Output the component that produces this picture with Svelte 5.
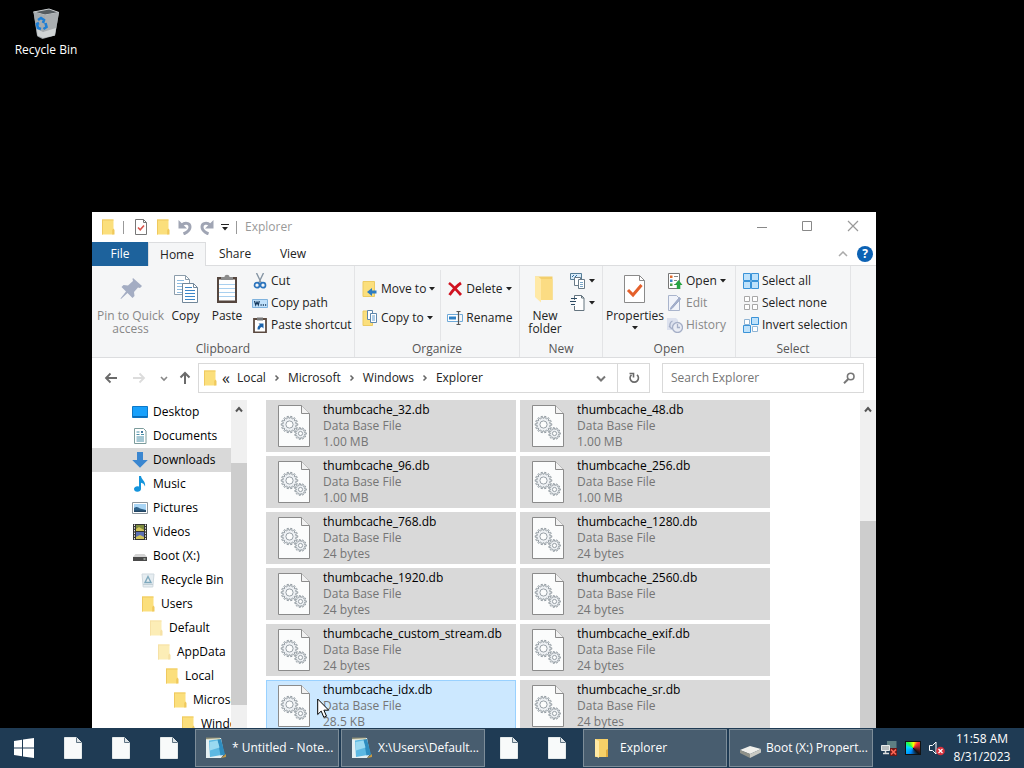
<script lang="ts">
  type TreeItem = { label: string; icon: string; level: number; current?: boolean };
  type FileItem = { name: string; size: string; active?: boolean };

  const tree: TreeItem[] = [
    { label: 'Desktop', icon: 'desktop', level: 0 },
    { label: 'Documents', icon: 'documents', level: 0 },
    { label: 'Downloads', icon: 'downloads', level: 0, current: true },
    { label: 'Music', icon: 'music', level: 0 },
    { label: 'Pictures', icon: 'pictures', level: 0 },
    { label: 'Videos', icon: 'videos', level: 0 },
    { label: 'Boot (X:)', icon: 'drive', level: 0 },
    { label: 'Recycle Bin', icon: 'bin', level: 1 },
    { label: 'Users', icon: 'folder', level: 1 },
    { label: 'Default', icon: 'folder-hidden', level: 2 },
    { label: 'AppData', icon: 'folder-hidden', level: 3 },
    { label: 'Local', icon: 'folder', level: 4 },
    { label: 'Microsoft', icon: 'folder', level: 5 },
    { label: 'Windows', icon: 'folder', level: 6 },
  ];

  const files: FileItem[] = [
    { name: 'thumbcache_32.db', size: '1.00 MB' },
    { name: 'thumbcache_48.db', size: '1.00 MB' },
    { name: 'thumbcache_96.db', size: '1.00 MB' },
    { name: 'thumbcache_256.db', size: '1.00 MB' },
    { name: 'thumbcache_768.db', size: '24 bytes' },
    { name: 'thumbcache_1280.db', size: '24 bytes' },
    { name: 'thumbcache_1920.db', size: '24 bytes' },
    { name: 'thumbcache_2560.db', size: '24 bytes' },
    { name: 'thumbcache_custom_stream.db', size: '24 bytes' },
    { name: 'thumbcache_exif.db', size: '24 bytes' },
    { name: 'thumbcache_idx.db', size: '28.5 KB', active: true },
    { name: 'thumbcache_sr.db', size: '24 bytes' },
  ];

  const crumbs = ['Local', 'Microsoft', 'Windows', 'Explorer'];
  const tabs = ['Home', 'Share', 'View'];

  let tab = $state('Home');
  let query = $state('');

  // outline of a gear centred on cx, cy
  function gear(cx: number, cy: number, outer: number, inner: number, teeth: number) {
    const points: string[] = [];
    const step = (Math.PI * 2) / teeth;
    for (let i = 0; i < teeth; i++) {
      const a = i * step;
      for (const [offset, r] of [[-0.28, inner], [-0.2, outer], [0.2, outer], [0.28, inner]]) {
        const angle = a + offset * step;
        points.push(`${(cx + Math.cos(angle) * r).toFixed(2)} ${(cy + Math.sin(angle) * r).toFixed(2)}`);
      }
    }
    return `M${points.join('L')}Z`;
  }

  const bigGear = gear(11.5, 19.5, 8.3, 6.4, 14);
  const smallGear = gear(22.5, 28.5, 5.9, 4.3, 11);
</script>

{#snippet icon(name: string, size = 16)}
  <svg class="icon" width={size} height={size} viewBox="0 0 16 16" aria-hidden="true">
    {#if name === 'folder' || name === 'folder-hidden'}
      <g opacity={name === 'folder' ? 1 : 0.55}>
        <path d="M2 .5h11.5v15H2z" fill="#fbdf7c" />
        <path d="M2 .5h11.5v1H3v14H2z" fill="#efc95f" />
        <path d="M12.2 15.5V11l1.3-1.5 1 1.5v4.5z" fill="#f0c95c" />
      </g>
    {:else if name === 'doc-check'}
      <path d="M2.5.5h8l3 3v12h-11z" fill="#fff" stroke="#777" />
      <path d="M10.5.5v3h3" fill="none" stroke="#777" />
      <path d="M5 8.500l2.200 2.300L11 6.500" fill="none" stroke="#d9534a" stroke-width="1.600" />
    {:else if name === 'undo' || name === 'redo'}
      <g transform={name === 'redo' ? 'matrix(-1 0 0 1 16 0)' : undefined}>
        <path d="M5 6C7.500 3.500 13 3.500 13 8c0 3.500-3 5.500-6.500 7" fill="none" stroke="#a0a5b4" stroke-width="3" />
        <path d="M1.500 1v8.500h8.500z" fill="#a0a5b4" />
      </g>
    {:else if name === 'desktop'}
      <path d="M.5 2.500h15v11H.5z" fill="#18a0fb" stroke="#0d78c8" />
      <path d="M1 12h14v1.500H1z" fill="#0a6cba" />
    {:else if name === 'documents'}
      <path d="M2.500.5h9l2.500 2.500v12.500H2.500z" fill="#fff" stroke="#7c9c9c" />
      <path d="M4.500 4h3M4.500 6.500h3M4.500 9h7.500M4.500 11h7.500M4.500 13h7.500M9 6.500h3" stroke="#4b90a8" />
      <path d="M9 3h2v2H9z" fill="#44789e" />
    {:else if name === 'downloads'}
      <path d="M5 0h6v8h4.800L8 15.800.2 8H5z" fill="#3a86d0" />
    {:else if name === 'music'}
      <path d="M7 0h2c.5 4 5 5 4 10.500-.8-2.500-2-3.300-4-3.700v6A3.500 2.800 0 1 1 7 10.500z" fill="#1494dc" />
    {:else if name === 'pictures'}
      <path d="M.5 2.500h15v11H.5z" fill="#fff" stroke="#8d969d" />
      <path d="M2 4h12v8H2z" fill="#a9d5f5" />
      <path d="M2 8c3-2 4-1 6 .5l6 1.500v2H2z" fill="#2f6188" />
      <path d="M2 10.500h12V12H2z" fill="#234562" />
    {:else if name === 'videos'}
      <path d="M1 0h14v16H1z" fill="#333" />
      <path d="M4 1h8v6H4z" fill="#7c8a3e" />
      <path d="M4 8h8v7H4z" fill="#5c70b4" />
      <path d="M4 5l3-2 5 3v1H4zM4 13l4-2 4 2v2H4z" fill="#d2c55a" />
      <path d="M2.500.5v15M13.500.5v15" stroke="#eee" stroke-dasharray="1.500 1.200" />
    {:else if name === 'drive'}
      <path d="M3.500 6h9L15 9H1z" fill="#d4d4d4" />
      <path d="M1 9h14v4H1z" fill="#4a4a4a" />
      <path d="M11.500 10.500h2v1h-2z" fill="#dde8dd" />
    {:else if name === 'bin'}
      <path d="M2 2h12l-1.200 13H3.200z" fill="#e6edf1" stroke="#cfd9df" />
      <path d="M8 4.500L5 10.500h6z" fill="none" stroke="#7fa9bd" stroke-width="1.400" />
      <path d="M3 12.500h10" stroke="#c4d0d6" />
    {:else if name === 'cut'}
      <path d="M4.500 0l4.800 10M11.500 0L6.700 10" stroke="#8695a4" stroke-width="1.400" />
      <circle cx="5" cy="12.200" r="2.500" fill="none" stroke="#2b74bd" stroke-width="1.700" />
      <circle cx="11" cy="12.200" r="2.500" fill="none" stroke="#2b74bd" stroke-width="1.700" />
    {:else if name === 'copy-path'}
      <path d="M.5 4.500h15v8H.5z" fill="#bfe0fa" stroke="#7fb2dd" />
      <path d="M2.500 6l1.200 4L5 7l1.300 3 1-4" fill="none" stroke="#173a5e" stroke-width="1.200" />
      <path d="M8.500 10h1.200M10.800 10H12M13 10h1.200" stroke="#173a5e" stroke-width="1.400" />
    {:else if name === 'paste-shortcut'}
      <path d="M2 2h12v13.500H2z" fill="#fff" stroke="#5b4a40" stroke-width="1.800" />
      <path d="M5 .5h6v3H5z" fill="#777" />
      <path d="M5.500 12.500c0-3 1-4 2.500-4.500L6.500 6.500h5v5L10 10c-1.500.3-2 1-2.300 2.500z" fill="#1b63ab" />
    {:else if name === 'move-to'}
      <path d="M1 .5h11.500v15H1z" fill="#fbdf7c" stroke="#eccb63" />
      <path d="M14.500 9.500H10V7l-5 4 5 4v-2.500h4.500z" fill="#2d7cc2" />
    {:else if name === 'copy-to'}
      <path d="M1 1h9.500v14.500H1z" fill="#fbdf7c" stroke="#eccb63" />
      <path d="M5.500.5h5v9h-5z" fill="#fff" stroke="#5e86ac" />
      <path d="M8.500 3.500h6v9h-6z" fill="#fff" stroke="#5e86ac" />
      <path d="M10 6h3M10 8h3M10 10h3" stroke="#5e9bd0" />
    {:else if name === 'delete'}
      <path d="M2 2C6 5 10 9.500 14 14M14 2C9.500 5 6 9 2.500 14" fill="none" stroke="#d01220" stroke-width="2.800" />
    {:else if name === 'rename'}
      <path d="M11 4.500H.5v7H11" fill="#fff" stroke="#6ea9d8" />
      <path d="M2 6.500h7v3H2z" fill="#2f80c5" />
      <path d="M12.500 4.500h3v7h-3" fill="none" stroke="#6ea9d8" />
      <path d="M9.500 1.500h4M11.500 1.500v13M9.500 14.500h4" stroke="#555" stroke-width="1.200" />
    {:else if name === 'new-item'}
      <path d="M.5.5h11v6H.5z" fill="#d9ecfa" stroke="#557c96" />
      <path d="M2 4l2-2M5 4l2-2" stroke="#2d6ca0" />
      <path d="M4.500 4.500h6v8h-6z" fill="#fff" stroke="#6a7b88" />
      <path d="M8.500 6.500h6v9h-6z" fill="#fff" stroke="#6a7b88" />
      <path d="M10 9.500h3M10 11.500h3M10 13.500h3" stroke="#7aa7c8" />
    {:else if name === 'easy-access'}
      <path d="M4.500 5V.5h7L14 3v12.500H4.500V11" fill="#fff" stroke="#64747f" />
      <path d="M11.500.5V3H14" fill="none" stroke="#64747f" />
      <path d="M1 3.500h6M0 6.500h6M1 9.500h4" stroke="#2c4a62" stroke-width="1.200" />
    {:else if name === 'open'}
      <path d="M1.500.5h11v15h-11z" fill="#fff" stroke="#777" />
      <path d="M3 2.500h2.500V5H3z" fill="#e06a2e" /><path d="M3 6.500h2.500V9H3z" fill="#3d85c6" />
      <path d="M3 10.500h2.500V13H3z" fill="#4fa34d" />
      <path d="M7 3.500h4M7 7.500h3M7 11.500h2" stroke="#888" />
      <path d="M9.800 16v-4H7.500L11.500 7l4 5h-2.200v4z" fill="#27a343" />
    {:else if name === 'edit'}
      <path d="M1.500.5h8l3 3v12h-11z" fill="#f0f3fa" stroke="#a9b4cc" />
      <path d="M13.500 4L5 13.500l-1.500.8.5-1.800L12.500 2.500z" fill="#a6b2cf" stroke="#98a5c4" />
    {:else if name === 'history'}
      <path d="M0 1h9l2 2v10H0z" fill="#dce1ee" />
      <circle cx="10.500" cy="10.500" r="5" fill="#e9ecf4" stroke="#a5afc7" stroke-width="1.300" />
      <path d="M10.500 7v3.500H13M2 9l3 3M5.500 4C3 5 2.500 7 3 10" fill="none" stroke="#a5afc7" stroke-width="1.300" />
    {:else if name === 'select-all'}
      <path d="M.5.5h7v7h-7zM8.500.5h7v7h-7zM.5 8.500h7v7h-7zM8.500 8.500h7v7h-7z" fill="#bfe2fb" stroke="#3a93d8" />
    {:else if name === 'select-none'}
      <path d="M1.500 1.500h5v5h-5zM9.500 1.500h5v5h-5zM1.500 9.500h5v5h-5zM9.500 9.500h5v5h-5z" fill="#fff" stroke="#a8a8a8" />
    {:else if name === 'invert'}
      <path d="M8.500.5h7v7h-7zM.5 8.500h7v7h-7z" fill="#bfe2fb" stroke="#3a93d8" />
      <path d="M1.500 2.500h5v5h-5zM9.500 9.500h5v5h-5z" fill="#fff" stroke="#8fb4d4" />
    {:else if name === 'back' || name === 'forward'}
      <path
        transform={name === 'forward' ? 'matrix(-1 0 0 1 16 0)' : undefined}
        d="M14 8H3M7.500 3.500L3 8l4.500 4.500"
        fill="none"
        stroke={name === 'back' ? '#6a6a6a' : '#dcdcdc'}
        stroke-width="1.800"
      />
    {:else if name === 'up'}
      <path d="M8 14V3M3.500 7.500L8 3l4.500 4.500" fill="none" stroke="#6a6a6a" stroke-width="2" />
    {:else if name === 'chevron-down'}
      <path d="M4 6.500l4 4 4-4" fill="none" stroke="#777" stroke-width="2" />
    {:else if name === 'chevron-up'}
      <path d="M5 9.500L8 6l3 3.500" fill="none" stroke="#555" stroke-width="2" />
    {:else if name === 'chevron-right'}
      <path d="M6.500 5.500L9 8l-2.500 2.500" fill="none" stroke="#666" stroke-width="1.500" />
    {:else if name === 'refresh'}
      <path d="M11 4.800A4.200 4.200 0 1 1 5.500 4.800" fill="none" stroke="#6a6a6a" stroke-width="1.600" />
      <path d="M3.500 3.500h4V7.500" fill="none" stroke="#6a6a6a" stroke-width="1.600" />
    {:else if name === 'search'}
      <circle cx="9.700" cy="6.500" r="3.300" fill="none" stroke="#777" stroke-width="1.600" />
      <path d="M7.300 9L3 13.200" stroke="#777" stroke-width="2" />
    {:else if name === 'minimize'}
      <path d="M4 8.500h10" stroke="#888" />
    {:else if name === 'maximize'}
      <path d="M3.500 2.500h9v9h-9z" fill="none" stroke="#888" />
    {:else if name === 'close'}
      <path d="M3 2l10 10M13 2L3 12" stroke="#999" stroke-width="1.200" />
    {/if}
  </svg>
{/snippet}

{#snippet caret()}
  <svg class="caret" width="6" height="4" viewBox="0 0 6 4" aria-hidden="true"><path d="M0 0h6L3 3.500z" fill="#222" /></svg>
{/snippet}

{#snippet command(name: string, label: string, menu = false, disabled = false)}
  <button class="command" {disabled}>
    {@render icon(name)}
    <span>{label}</span>
    {#if menu}{@render caret()}{/if}
  </button>
{/snippet}

{#snippet notepad()}
  <svg class="icon" width="22" height="24" viewBox="0 0 22 24" aria-hidden="true">
    <path d="M1 3l15-1 3 16-3 4H1z" fill="#e4eff2" />
    <path d="M4 4.500l11-1.500 4.500 15.500L5 21z" fill="#5cb8e2" />
    <path d="M12.500 3.500l3.500-.5 4 15.500-4.500 1z" fill="#2e8dc0" />
    <path d="M4.500 6l8-1.500 2 7-9.500 3z" fill="#9ad9f1" />
    <path d="M1.500 2.500h14" stroke="#c9b878" stroke-width="2" stroke-dasharray="1 1" />
    <path d="M16 22l5-4v3z" fill="#c99c43" />
  </svg>
{/snippet}

{#snippet blankFile()}
  <svg class="icon" width="18" height="22" viewBox="0 0 18 22" aria-hidden="true">
    <path d="M.5.5h12l5 5v16H.5z" fill="#f8fafa" stroke="#e4e9ea" />
    <path d="M12.500.5v5h5" fill="#dde3e6" stroke="#5f7382" />
  </svg>
{/snippet}

<div class="screen">
  <main class="desktop">
    <button class="shortcut">
      <svg width="32" height="32" viewBox="0 0 32 32" aria-hidden="true">
        <path d="M3.500 4L19 1l10 3.500-4 23-12.500 3.500-5-2.500z" fill="#9da2a5" />
        <path d="M3.500 4L19 1l10 3.500L15 7z" fill="#555c60" stroke="#c6cacc" />
        <path d="M3.500 4L15 7l-2 23-6-2.500z" fill="#a4abaf" />
        <path d="M15 7l14-2.500-4 23L13 30z" fill="#a9aeb1" />
        <path d="M7 21l6 3 13-4-1.500 7.500L13 30l-5.500-2.500z" fill="#e3e5e5" opacity="0.7" />
        <path d="M8 12l3-2 3 2-1 3M15.500 15l1 4-3 2M11 21l-3-1-1-4 2-1" fill="none" stroke="#1d7fd6" stroke-width="2.600" />
      </svg>
      <span>Recycle Bin</span>
    </button>

    <section class="window" aria-label="Explorer">
      <header class="titlebar">
        <div class="quick">
          {@render icon('folder')}
          <i class="bar first"></i>
          <button aria-label="Properties">{@render icon('doc-check')}</button>
          <button aria-label="New folder">{@render icon('folder')}</button>
          <button aria-label="Undo">{@render icon('undo')}</button>
          <button aria-label="Redo">{@render icon('redo')}</button>
          <button class="customize" aria-label="Customize toolbar">
            <svg class="icon" width="8" height="8" viewBox="0 0 8 8"><path d="M0 1.500h8" stroke="#222" /><path d="M1 4h6L4 7.500z" fill="#222" /></svg>
          </button>
          <i class="bar"></i>
        </div>
        <span class="title">Explorer</span>
        <div class="controls">
          <button aria-label="Minimize">{@render icon('minimize')}</button>
          <button aria-label="Maximize">{@render icon('maximize')}</button>
          <button aria-label="Close">{@render icon('close')}</button>
        </div>
      </header>

      <nav class="tabs" aria-label="Ribbon">
        <button class="file-tab">File</button>
        {#each tabs as name (name)}
          <button class="tab" class:selected={tab === name} onclick={() => (tab = name)}>{name}</button>
        {/each}
        <button class="collapse" aria-label="Collapse ribbon">
          <svg class="icon" width="10" height="6" viewBox="0 0 10 6"><path d="M1 5l4-4 4 4" fill="none" stroke="#aaa" stroke-width="1.500" /></svg>
        </button>
        <button class="help" aria-label="Help">?</button>
      </nav>

      <div class="ribbon">
        <div class="group clipboard">
          <div class="tools">
            <button class="big pin" disabled>
              <svg class="icon" width="32" height="32" viewBox="0 0 32 32" aria-hidden="true">
                <path d="M17 6l9 8-2 2-2-.5-4 4.500.5 4-2 2-5-5L5 27l-.5-.5L10 19.500l-4.500-4.500 2-2 4.500.5 5-4.500-.5-2z" fill="#a4adc3" transform="translate(1 -1)" />
              </svg>
              <span>Pin to Quick access</span>
            </button>
            <button class="big copy">
              <svg class="icon" width="32" height="32" viewBox="0 0 32 32" aria-hidden="true">
                <path d="M4.500 2.500h11l4 4v15h-15z" fill="#fff" stroke="#8c9dab" />
                <path d="M15.500 2.500v4h4" fill="none" stroke="#8c9dab" />
                <path d="M7 7.500h7M7 10.500h10M7 13.500h10M7 16.500h10M7 19.500h10" stroke="#8dbbe0" />
                <path d="M12.500 10.500h11l4 4v15h-15z" fill="#fff" stroke="#71879a" />
                <path d="M23.500 10.500v4h4" fill="none" stroke="#71879a" />
                <path d="M15 14.500h7M15 17.500h10M15 20.500h10M15 23.500h10M15 26.500h10" stroke="#3b86c8" />
              </svg>
              <span>Copy</span>
            </button>
            <button class="big paste">
              <svg class="icon" width="32" height="32" viewBox="0 0 32 32" aria-hidden="true">
                <path d="M6 4h20v26H6z" fill="#55463f" />
                <path d="M8 6.500h16v21H8z" fill="#fff" />
                <path d="M8 11.500h16M8 15.500h16M8 19.500h16M8 23.500h16" stroke="#a9d0ef" />
                <path d="M10 7V4h3.500c0-3 5-3 5 0H22v3z" fill="#8b8b8b" />
              </svg>
              <span>Paste</span>
            </button>
            <div class="stack">
              {@render command('cut', 'Cut')}
              {@render command('copy-path', 'Copy path')}
              {@render command('paste-shortcut', 'Paste shortcut')}
            </div>
          </div>
          <div class="caption">Clipboard</div>
        </div>

        <div class="group organize">
          <div class="tools">
            <div class="stack roomy">
              {@render command('move-to', 'Move to', true)}
              {@render command('copy-to', 'Copy to', true)}
            </div>
            <div class="stack roomy divided">
              {@render command('delete', 'Delete', true)}
              {@render command('rename', 'Rename')}
            </div>
          </div>
          <div class="caption">Organize</div>
        </div>

        <div class="group new">
          <div class="tools">
            <button class="big">
              <svg class="icon" width="32" height="32" viewBox="0 0 32 32" aria-hidden="true">
                <path d="M6 3.500h17.500V27L12 25.500 6 23z" fill="#f3cf6d" />
                <path d="M6 3.500h3l3 2.500v23.500L6 24z" fill="#ffe9a6" />
                <path d="M12 6h11.500v21H12z" fill="#fbdc83" />
              </svg>
              <span>New folder</span>
            </button>
            <div class="stack">
              <button class="command" aria-label="New item">{@render icon('new-item')}{@render caret()}</button>
              <button class="command" aria-label="Easy access">{@render icon('easy-access')}{@render caret()}</button>
            </div>
          </div>
          <div class="caption">New</div>
        </div>

        <div class="group open">
          <div class="tools">
            <button class="big props">
              <svg class="icon" width="32" height="32" viewBox="0 0 32 32" aria-hidden="true">
                <path d="M5.500 2.500h15l5 5v22h-20z" fill="#fff" stroke="#8a8a8a" />
                <path d="M20.500 2.500v5h5" fill="none" stroke="#8a8a8a" />
                <path d="M9 17l5 5 8.500-10" fill="none" stroke="#e4602b" stroke-width="3" />
              </svg>
              <span>Properties</span>
              {@render caret()}
            </button>
            <div class="stack">
              {@render command('open', 'Open', true)}
              {@render command('edit', 'Edit', false, true)}
              {@render command('history', 'History', false, true)}
            </div>
          </div>
          <div class="caption">Open</div>
        </div>

        <div class="group select">
          <div class="tools">
            <div class="stack">
              {@render command('select-all', 'Select all')}
              {@render command('select-none', 'Select none')}
              {@render command('invert', 'Invert selection')}
            </div>
          </div>
          <div class="caption">Select</div>
        </div>
      </div>

      <div class="location">
        <div class="history">
          <button aria-label="Back">{@render icon('back')}</button>
          <button aria-label="Forward">{@render icon('forward')}</button>
          <button class="recent" aria-label="Recent locations">
            <svg class="icon" width="8" height="8" viewBox="0 0 8 8"><path d="M1 3l3 3 3-3" fill="none" stroke="#888" stroke-width="1.600" /></svg>
          </button>
          <button aria-label="Up">{@render icon('up')}</button>
        </div>
        <div class="address">
          {@render icon('folder')}
          <span class="more">«</span>
          {#each crumbs as crumb, i (crumb)}
            {#if i > 0}{@render icon('chevron-right')}{/if}
            <button class="crumb">{crumb}</button>
          {/each}
          <button class="drop" aria-label="Previous locations">{@render icon('chevron-down')}</button>
          <button class="refresh" aria-label="Refresh">{@render icon('refresh')}</button>
        </div>
        <label class="search">
          <input type="text" aria-label="Search Explorer" placeholder="Search Explorer" bind:value={query} />
          {@render icon('search')}
        </label>
      </div>

      <div class="body">
        <nav class="tree" aria-label="Folders">
          {#each tree as item (item.label)}
            <button class="node level-{item.level}" class:current={item.current}>
              {@render icon(item.icon)}
              <span>{item.label}</span>
            </button>
          {/each}
        </nav>
        <div class="scrollbar">
          <div class="arrow">{@render icon('chevron-up')}</div>
          <div class="thumb tree-thumb"></div>
        </div>

        <div class="files">
          {#each files as file (file.name)}
            <button class="tile" class:active={file.active}>
              <svg class="icon" width="32" height="42" viewBox="0 0 32 42" aria-hidden="true">
                <path d="M.5.5h23l8 8v33H.5z" fill="#fbfcfc" stroke="#8b8b8b" />
                <path d="M23.500.5v8h8" fill="#f1f1f1" stroke="#8b8b8b" />
                <g fill="#eef1f4" stroke="#8f979e" stroke-width="0.900">
                  <path d={bigGear} /><circle cx="11.500" cy="19.500" r="3.600" fill="#fbfcfc" />
                  <path d={smallGear} /><circle cx="22.500" cy="28.500" r="2.100" fill="#fbfcfc" />
                </g>
              </svg>
              <span class="details">
                <span class="name">{file.name}</span>
                <span>Data Base File</span>
                <span>{file.size}</span>
              </span>
            </button>
          {/each}
        </div>
        <div class="scrollbar">
          <div class="arrow">{@render icon('chevron-up')}</div>
          <div class="thumb file-thumb"></div>
        </div>
      </div>
    </section>

    <svg class="pointer" width="13" height="21" viewBox="0 0 13 21" aria-hidden="true">
      <path d="M.7 1v15.500l3.500-3.400 2.600 6.200 2.700-1.100-2.600-6h4.800z" fill="#fff" stroke="#000" />
    </svg>
  </main>

  <footer class="taskbar">
    <button class="slot start" aria-label="Start">
      <svg class="icon" width="20" height="20" viewBox="0 0 20 20">
        <path d="M0 3l8-1.200V9.500H0zM9 1.600L20 0v9.500H9zM0 10.500h8v7.700L0 17zM9 10.500h11V20L9 18.400z" fill="#fff" />
      </svg>
    </button>
    {#each ['1', '2', '3'] as n (n)}
      <button class="slot" aria-label="Application {n}">{@render blankFile()}</button>
    {/each}
    <button class="task">{@render notepad()}<span>* Untitled - Note...</span></button>
    <button class="task">{@render notepad()}<span>X:\Users\Default...</span></button>
    {#each ['4', '5'] as n (n)}
      <button class="slot" aria-label="Application {n}">{@render blankFile()}</button>
    {/each}
    <button class="task">
      <svg class="icon" width="22" height="24" viewBox="0 0 22 24" aria-hidden="true">
        <path d="M2 3h13v18H2z" fill="#f6d068" />
        <path d="M2 3l4 2v17l-4-2z" fill="#ffe9a4" />
        <path d="M13 14l2-1v8h-2z" fill="#dfaa3e" />
      </svg>
      <span>Explorer</span>
    </button>
    <button class="task">
      <svg class="icon" width="22" height="24" viewBox="0 0 22 24" aria-hidden="true">
        <path d="M1 14l10-4 11 3-11 5z" fill="#f0f0ec" />
        <path d="M1 14l10 4v4L1 17z" fill="#8f9189" />
        <path d="M11 18l11-5v3.500L11 22z" fill="#c8c9c3" />
      </svg>
      <span>Boot (X:) Propert...</span>
    </button>

    <div class="tray">
      <svg class="icon" width="16" height="16" viewBox="0 0 16 16" role="img" aria-label="Network disconnected">
        <path d="M6 1h9.500v8H6z" fill="#5e7f83" />
        <path d="M.5 5.500h8v5h-8z" fill="#b7bdbf" stroke="#e7eaea" />
        <path d="M2 13.500h6M4.500 11v2" stroke="#ddd" stroke-width="1.500" />
        <path d="M9 8h7v8H9z" fill="#6b1919" />
        <path d="M10 9.500l5 5M15 9.500l-5 5" stroke="#ff6553" stroke-width="1.700" />
      </svg>
      <span class="palette"></span>
      <svg class="icon" width="16" height="16" viewBox="0 0 16 16" role="img" aria-label="Muted">
        <path d="M.5 5.500h3L7 2v12l-3.500-3.500h-3z" fill="none" stroke="#fff" />
        <circle cx="11.500" cy="11" r="4.300" fill="#d5303c" />
        <path d="M9.500 9l4 4M13.500 9l-4 4" stroke="#fff" stroke-width="1.200" />
      </svg>
    </div>
    <div class="clock"><span>11:58 AM</span><span>8/31/2023</span></div>
  </footer>
</div>

<style>
  :global(body) {
    margin: 0;
    background: #000;
  }

  .screen {
    display: flex;
    flex-direction: column;
    height: 100vh;
    overflow: hidden;
    font: 12px/16px 'Open Sans', 'Noto Sans', sans-serif;
    color: #222;
  }

  button {
    display: flex;
    align-items: center;
    margin: 0;
    padding: 0;
    border: 0;
    background: none;
    color: inherit;
    font: inherit;
    white-space: nowrap;
  }

  .icon,
  .caret {
    display: block;
    flex: none;
  }

  .desktop {
    position: relative;
    flex: 1;
    min-height: 0;
    overflow: hidden;
    background: #000;
  }

  .shortcut {
    flex-direction: column;
    gap: 2px;
    width: 92px;
    padding-top: 8px;
    color: #fff;
  }

  .window {
    position: absolute;
    inset: 212px 148px 0 92px;
    display: flex;
    flex-direction: column;
    overflow: hidden;
    background: #fff;
  }

  .titlebar {
    display: flex;
    align-items: center;
    height: 30px;
  }

  .quick {
    display: flex;
    align-items: center;
    gap: 6px;
    padding-left: 8px;
  }

  .bar {
    width: 1px;
    height: 13px;
    background: #999;
  }

  .bar.first {
    margin: 0 3px 0 1px;
  }

  .quick .customize {
    width: 8px;
    margin-right: 1px;
  }

  .title {
    padding-left: 8px;
    color: #999;
  }

  .controls {
    display: flex;
    margin-left: auto;
  }

  .controls button {
    justify-content: center;
    width: 46px;
    height: 30px;
  }

  .tabs {
    display: flex;
    align-items: center;
    height: 24px;
    padding-right: 3px;
    box-shadow: inset 0 -1px #dcdddf;
  }

  .file-tab,
  .tab {
    justify-content: center;
    height: 24px;
  }

  .file-tab {
    width: 56px;
    background: #1d629c;
    color: #fff;
  }

  .tab {
    width: 58px;
  }

  .tab.selected {
    box-sizing: border-box;
    border: 1px solid #dcdddf;
    border-bottom: 0;
    background: #f5f6f7;
  }

  .tabs .collapse {
    margin-left: auto;
  }

  .help {
    justify-content: center;
    width: 16px;
    height: 16px;
    margin-left: 9px;
    border-radius: 50%;
    background: #0c62b4;
    color: #fff;
    font-weight: 700;
  }

  .ribbon {
    display: flex;
    height: 91px;
    border-bottom: 1px solid #dcdddf;
    background: #f5f6f7;
  }

  .group {
    display: flex;
    flex-direction: column;
    box-sizing: border-box;
    border-right: 1px solid #e3e4e6;
  }

  .tools {
    display: flex;
    flex: 1;
    padding-top: 4px;
  }

  .caption {
    color: #555;
    text-align: center;
  }

  .clipboard {
    width: 263px;
  }

  .organize {
    width: 165px;
  }

  .new {
    width: 83px;
  }

  .open {
    width: 133px;
  }

  .select {
    width: 115px;
  }

  .big {
    flex-direction: column;
    align-self: flex-start;
    width: 50px;
    padding-top: 3px;
    line-height: 13px;
    white-space: normal;
  }

  .big span {
    padding-top: 4px;
  }

  .big .caret {
    margin-top: 4px;
  }

  .pin {
    width: 77px;
  }

  .copy {
    width: 33px;
  }

  .props {
    width: 64px;
  }

  button:disabled {
    color: #888;
  }

  .stack {
    display: flex;
    flex-direction: column;
  }

  .command {
    gap: 3px;
    height: 22px;
  }

  .roomy {
    gap: 7px;
    padding: 8px 0 0 7px;
  }

  .roomy.divided {
    margin-left: 5px;
    border-left: 1px solid #e3e4e6;
    padding-left: 6px;
  }

  .select .stack {
    padding-left: 7px;
  }

  .location {
    display: flex;
    align-items: center;
    height: 40px;
    padding: 0 12px 2px 0;
  }

  .history {
    display: flex;
    align-items: center;
    gap: 12px;
    padding: 0 5px 0 11px;
  }

  .history .recent {
    margin: 0 -3px 0 1px;
  }

  .address {
    display: flex;
    flex: 1;
    align-items: center;
    box-sizing: border-box;
    height: 30px;
    padding-left: 3px;
    border: 1px solid #d9d9d9;
  }

  .more {
    padding: 0 7px 0 4px;
    font-size: 16px;
  }

  .address .crumb + :global(svg) {
    margin: 0 3px;
  }

  .drop {
    margin-left: auto;
    padding-right: 8px;
  }

  .refresh {
    justify-content: center;
    width: 32px;
    height: 28px;
    border-left: 1px solid #d9d9d9;
  }

  .search {
    display: flex;
    align-items: center;
    box-sizing: border-box;
    width: 202px;
    height: 30px;
    margin-left: 12px;
    padding: 0 6px 0 8px;
    border: 1px solid #d9d9d9;
  }

  .search input {
    flex: 1;
    min-width: 0;
    padding: 0;
    border: 0;
    outline: 0;
    background: none;
    color: #222;
    font: inherit;
  }

  .search input::placeholder {
    color: #757575;
    opacity: 1;
  }

  .body {
    display: flex;
    flex: 1;
    min-height: 0;
    overflow: hidden;
    color: #000;
  }

  .tree {
    width: 139px;
    overflow: hidden;
  }

  .node {
    gap: 5px;
    box-sizing: border-box;
    width: 100%;
    height: 24px;
    padding-left: 40px;
  }

  .node.current {
    background: #d9d9d9;
  }

  .level-1 {
    padding-left: 48px;
  }

  .level-2 {
    padding-left: 56px;
  }

  .level-3 {
    padding-left: 64px;
  }

  .level-4 {
    padding-left: 72px;
  }

  .level-5 {
    padding-left: 80px;
  }

  .level-6 {
    padding-left: 88px;
  }

  .scrollbar {
    display: flex;
    flex: none;
    flex-direction: column;
    width: 16px;
    background: #f0f0f0;
  }

  .arrow {
    padding: 2px 0;
  }

  .thumb {
    background: #cdcdcd;
  }

  .tree-thumb {
    height: 242px;
    margin-top: 43px;
  }

  .file-thumb {
    flex: 1;
    margin-top: 101px;
  }

  .files {
    display: grid;
    flex: 1;
    grid-template-columns: 250px 250px;
    grid-auto-rows: 52px;
    gap: 4px;
    padding-left: 19px;
  }

  .tile {
    gap: 13px;
    padding-left: 12px;
    background: #d9d9d9;
    text-align: left;
  }

  .tile.active {
    background: #cce8ff;
    box-shadow: inset 0 0 0 1px #99d1ff;
  }

  .details {
    display: flex;
    flex-direction: column;
    color: #757575;
  }

  .name {
    color: #000;
  }

  .pointer {
    position: absolute;
    top: 698px;
    left: 317px;
  }

  .taskbar {
    display: flex;
    align-items: center;
    height: 40px;
    background: #1f3b54;
    color: #fff;
  }

  .slot {
    flex: none;
    justify-content: center;
    width: 48px;
    height: 40px;
  }

  .start {
    margin-right: 1px;
  }

  .slot + .task {
    margin-left: 2px;
  }

  .task {
    flex: none;
    gap: 5px;
    box-sizing: border-box;
    width: 144px;
    height: 38px;
    padding-left: 9px;
    border: 1px solid #7d8d99;
    background: #485d6f;
  }

  .task + .task {
    margin-left: 2px;
  }

  .tray {
    display: flex;
    align-items: center;
    gap: 8px;
    margin-left: auto;
  }

  .palette {
    box-sizing: border-box;
    width: 16px;
    height: 14px;
    border: 1px solid #111;
    background: conic-gradient(from 45deg, #f33, #111 25%, #08f 45%, #0df 65%, #2f4 75%, #ff0 90%, #f33);
  }

  .clock {
    display: flex;
    flex-direction: column;
    width: 74px;
    padding-right: 5px;
    line-height: 18px;
    text-align: center;
  }
</style>
